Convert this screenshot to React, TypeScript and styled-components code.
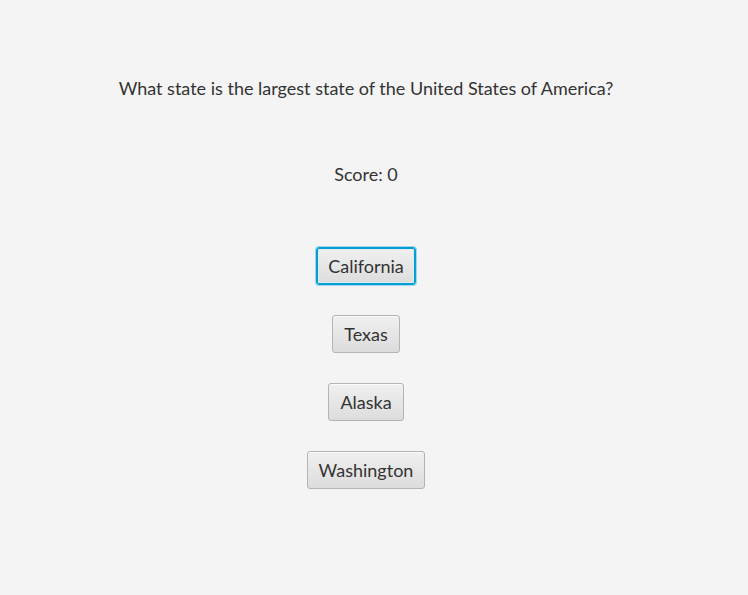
import styled, { createGlobalStyle } from 'styled-components';

const GlobalStyle = createGlobalStyle`
    html, body {
        margin: 0;
        padding: 0;
        background-color: #f4f4f4;
    }
    body {
        font-family: "Segoe UI", "Lato", "Noto Sans", sans-serif;
    }
`;

const Page = styled.div`
    width: 732px;
    height: 595px;
    display: flex;
    flex-direction: column;
    align-items: center;
    color: #333333;
`;

const Question = styled.div`
    margin-top: 76px;
    font-size: 18px;
    line-height: 24px;
`;

const Score = styled.div`
    margin-top: 62px;
    font-size: 18px;
    line-height: 24px;
`;

const Answers = styled.div`
    margin-top: 61px;
    display: flex;
    flex-direction: column;
    align-items: center;
    gap: 30px;
`;

const AnswerButton = styled.button<{ $focused?: boolean }>`
    box-sizing: border-box;
    height: 38px;
    padding: 0 11px;
    font-family: inherit;
    font-size: 18px;
    color: #333333;
    border-radius: 3px;
    cursor: pointer;
    background: linear-gradient(to bottom, #f0f0f0 0%, #e6e6e6 50%, #dcdcdc 100%);
    border: 1px solid ${p => (p.$focused ? '#039ed3' : '#b4b4b4')};
    box-shadow: ${p =>
        p.$focused
            ? '0 0 0 1px rgba(3, 158, 211, 0.35), inset 0 0 0 1px #039ed3, inset 0 0 0 2px #dcebf3'
            : 'inset 0 1px 0 #fafafa'};

    &:hover {
        background: linear-gradient(to bottom, #f6f6f6 0%, #ececec 100%);
    }
`;

const answers = ['California', 'Texas', 'Alaska', 'Washington'];

const App = () => {
    return (
        <>
            <GlobalStyle />
            <Page>
                <Question>What state is the largest state of the United States of America?</Question>
                <Score>Score: 0</Score>
                <Answers>
                    {answers.map((a, i) => (
                        <AnswerButton key={a} $focused={i === 0}>
                            {a}
                        </AnswerButton>
                    ))}
                </Answers>
            </Page>
        </>
    );
};

export default App;
